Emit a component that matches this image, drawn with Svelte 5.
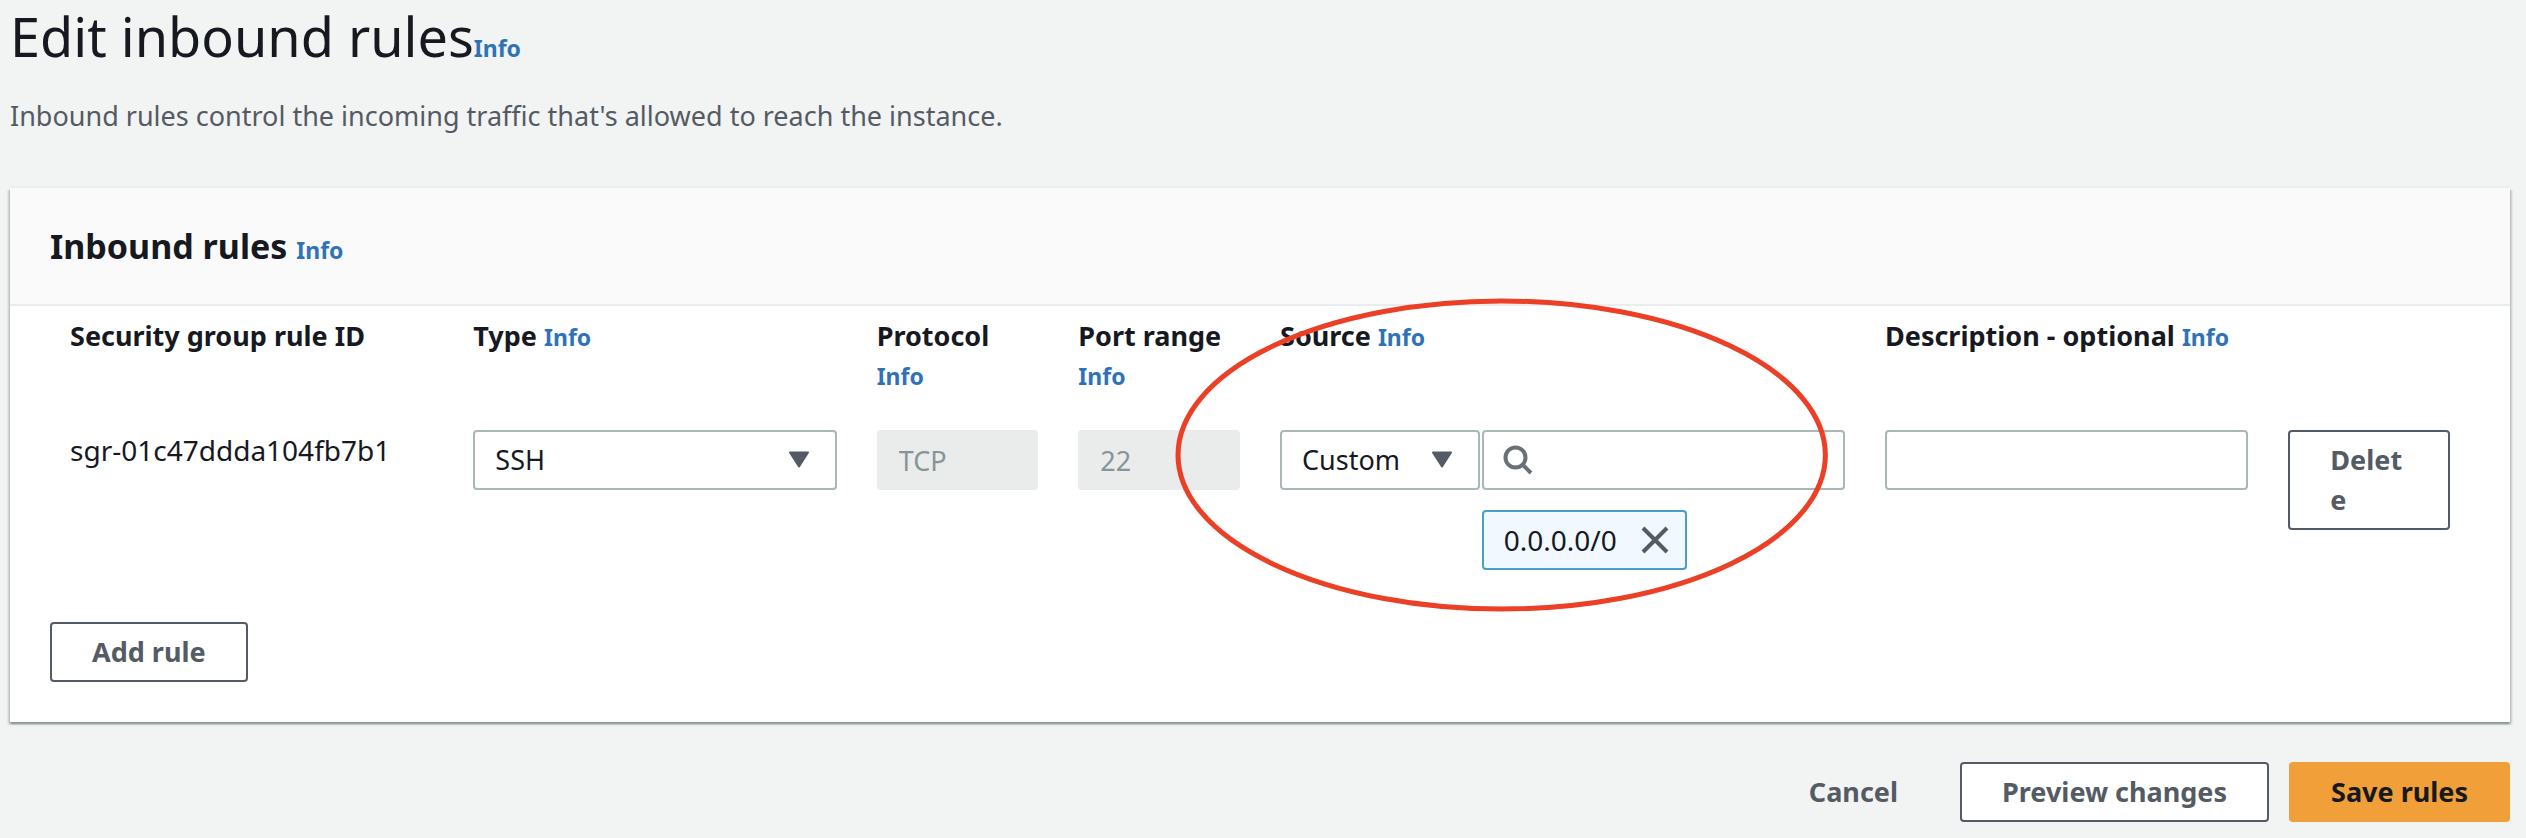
<script>
  let type = $state('SSH');
  let source = $state('Custom');
  let search = $state('');
  let description = $state('');
</script>

{#snippet caret()}
  <svg class="caret" viewBox="0 0 22 17" aria-hidden="true">
    <path d="M2 1.5h18L11 15.5z" fill="#545b64" stroke="#545b64" stroke-width="2" stroke-linejoin="round" />
  </svg>
{/snippet}

<main>
  <header class="page-head">
    <h1>Edit inbound rules<a class="info" href="#edit-info">Info</a></h1>
    <p>Inbound rules control the incoming traffic that's allowed to reach the instance.</p>
  </header>

  <section class="panel">
    <div class="panel-head">
      <h2>Inbound rules <a class="info" href="#rules-info">Info</a></h2>
    </div>

    <div class="panel-body">
      <div class="rule">
        <div class="col span2">
          <div class="label">Security group rule ID</div>
          <div class="rule-id">sgr-01c47ddda104fb7b1</div>
        </div>

        <div class="col span2">
          <div class="label"><label for="type">Type</label> <a class="info" href="#type-info">Info</a></div>
          <div class="field">
            <select id="type" bind:value={type}>
              <option>SSH</option>
              <option>HTTP</option>
              <option>HTTPS</option>
            </select>
            {@render caret()}
          </div>
        </div>

        <div class="col">
          <div class="label"><label for="protocol">Protocol</label> <a class="info line" href="#protocol-info">Info</a></div>
          <input id="protocol" type="text" value="TCP" disabled />
        </div>

        <div class="col">
          <div class="label"><label for="port">Port range</label> <a class="info line" href="#port-info">Info</a></div>
          <input id="port" type="text" value="22" disabled />
        </div>

        <div class="col span3">
          <div class="label"><label for="source">Source</label> <a class="info" href="#source-info">Info</a></div>
          <div class="source">
            <div class="field">
              <select id="source" bind:value={source}>
                <option>Custom</option>
                <option>Anywhere</option>
                <option>My IP</option>
              </select>
              {@render caret()}
            </div>
            <div>
              <div class="field">
                <input class="search" type="search" aria-label="Search sources" bind:value={search} />
                <svg class="lens" viewBox="0 0 30 30" fill="none" stroke="#687078" stroke-width="4" aria-hidden="true">
                  <circle cx="12.5" cy="12.5" r="10" />
                  <path d="M19.5 19.5l8.5 8.5" />
                </svg>
              </div>
              <div class="chip">
                <span>0.0.0.0/0</span>
                <button type="button" aria-label="Remove 0.0.0.0/0">
                  <svg viewBox="0 0 28 28" fill="none" stroke="#545b64" stroke-width="4" aria-hidden="true">
                    <path d="M2 2l24 24M26 2L2 26" />
                  </svg>
                </button>
              </div>
            </div>
          </div>
          <svg class="ring" viewBox="0 0 650 314" preserveAspectRatio="none" fill="none" stroke="#eb4026" stroke-width="5" aria-hidden="true">
            <ellipse cx="325" cy="157" rx="322" ry="154" />
          </svg>
        </div>

        <div class="col span2">
          <div class="label"><label for="description">Description - optional</label> <a class="info" href="#description-info">Info</a></div>
          <input id="description" type="text" bind:value={description} />
        </div>

        <div class="col">
          <div class="label"></div>
          <button type="button" class="btn delete">Delete</button>
        </div>
      </div>

      <button type="button" class="btn">Add rule</button>
    </div>
  </section>

  <footer>
    <button type="button" class="btn link">Cancel</button>
    <button type="button" class="btn">Preview changes</button>
    <button type="button" class="btn primary">Save rules</button>
  </footer>
</main>

<style>
  :global(body) {
    background: #f2f3f3;
  }
  main,
  main * {
    box-sizing: border-box;
  }
  main {
    padding: 0 16px 16px 10px;
    font: 400 27px/40px "Noto Sans", "Open Sans", sans-serif;
    color: #16191f;
  }
  h1,
  h2,
  p {
    margin: 0;
  }
  h1 {
    font-size: 54px;
    line-height: 72px;
    font-weight: 400;
  }
  h2 {
    font-size: 34px;
    line-height: 44px;
    font-weight: 700;
  }
  .page-head p {
    margin-top: 24px;
    color: #545b64;
  }
  .info {
    font-size: 23px;
    line-height: 1;
    font-weight: 700;
    color: #2e73b8;
    text-decoration: none;
  }
  .info.line {
    display: block;
    line-height: 40px;
  }
  .panel {
    margin-top: 52px;
    background: #fff;
    box-shadow:
      0 -2px 0 #eaeded,
      0 2px 2px #879596,
      2px 2px 2px rgba(0, 28, 36, 0.15),
      -2px 2px 2px rgba(0, 28, 36, 0.15);
  }
  .panel-head {
    padding: 36px 40px;
    background: #fafafa;
    border-bottom: 2px solid #eaeded;
  }
  .panel-body {
    padding: 10px 40px 40px;
  }
  .rule {
    display: grid;
    grid-template-columns: repeat(12, minmax(0, 1fr));
    margin-bottom: 52px;
  }
  .col {
    position: relative;
    padding: 0 20px;
  }
  .span2 {
    grid-column: span 2;
  }
  .span3 {
    grid-column: span 3;
  }
  .label {
    height: 114px;
    font-weight: 700;
  }
  .rule-id,
  .chip {
    font-size: 28px;
  }
  .field {
    position: relative;
  }
  select,
  input {
    display: block;
    width: 100%;
    height: 60px;
    margin: 0;
    padding: 0 20px;
    border: 2px solid #aab7b8;
    border-radius: 4px;
    background: #fff;
    font: inherit;
    color: inherit;
    appearance: none;
  }
  input:disabled {
    border-color: #eaecec;
    background: #eaecec;
    color: #879596;
  }
  .search {
    padding-left: 62px;
  }
  .caret {
    position: absolute;
    top: 21px;
    right: 27px;
    width: 22px;
    height: 17px;
    pointer-events: none;
  }
  .lens {
    position: absolute;
    top: 15px;
    left: 21px;
    width: 30px;
    height: 30px;
    pointer-events: none;
  }
  .source {
    display: grid;
    grid-template-columns: calc((100% + 34px) / 3) minmax(0, 1fr);
    gap: 2px;
  }
  .chip {
    display: inline-flex;
    align-items: center;
    gap: 24px;
    height: 60px;
    margin-top: 20px;
    padding: 0 16px 0 20px;
    border: 2px solid #48a0c7;
    border-radius: 4px;
    background: #f1f8ff;
    vertical-align: top;
  }
  .chip button {
    padding: 0;
    border: 0;
    background: none;
  }
  .chip svg {
    display: block;
    width: 28px;
    height: 28px;
  }
  .ring {
    position: absolute;
    top: -18px;
    left: -14%;
    width: 108%;
    height: 314px;
    pointer-events: none;
  }
  .btn {
    display: block;
    padding: 8px 40px;
    border: 2px solid #545b64;
    border-radius: 4px;
    background: #fff;
    font: inherit;
    font-weight: 700;
    color: #545b64;
  }
  .delete {
    width: 100%;
    text-align: left;
    overflow-wrap: anywhere;
  }
  .link {
    border-color: transparent;
    background: none;
  }
  .primary {
    border-color: #f19f38;
    background: #f19f38;
    color: #16191f;
  }
  footer {
    display: flex;
    justify-content: flex-end;
    gap: 20px;
    margin-top: 40px;
  }
</style>
